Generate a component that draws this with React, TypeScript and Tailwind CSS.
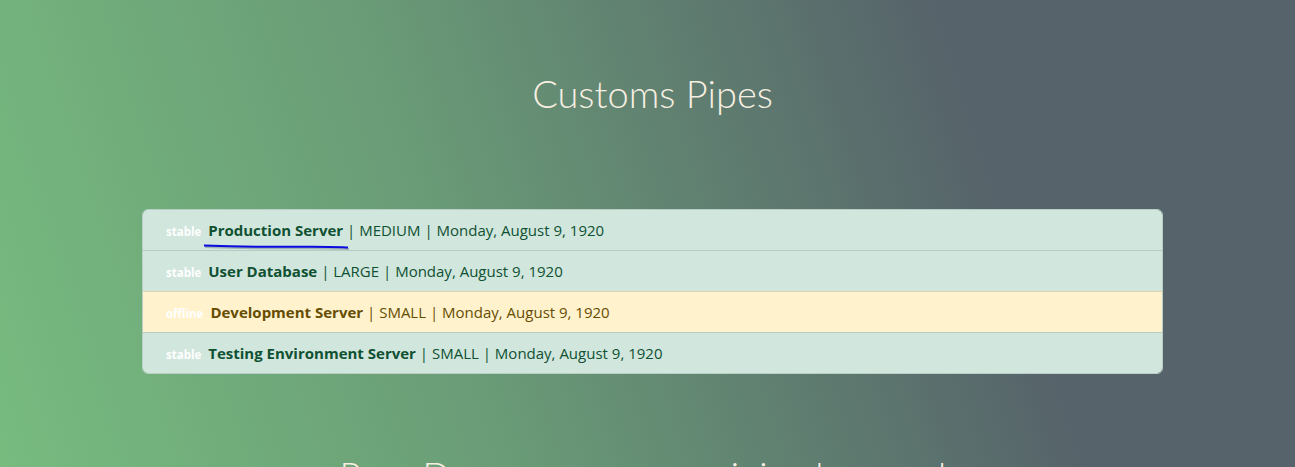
import React from "react";

type Server = { name: string; size: string; status: "stable" | "offline" };

const servers: Server[] = [
  { name: "Production Server", size: "MEDIUM", status: "stable" },
  { name: "User Database", size: "LARGE", status: "stable" },
  { name: "Development Server", size: "SMALL", status: "offline" },
  { name: "Testing Environment Server", size: "SMALL", status: "stable" },
];

export default function App() {
  return (
    <div
      className="h-[467px] w-full overflow-hidden bg-[linear-gradient(72deg,#77bb7f_0%,#6a9c77_35%,#56636a_75%,#56636a_100%)]"
      style={{ fontFamily: '"Open Sans", "Noto Sans", sans-serif' }}
    >
      <div className="ml-[142px] w-[1021px]">
        <h2
          className="pt-[69px] text-center text-[38px] font-light leading-[48px] text-[#f7efe2]"
          style={{ fontFamily: 'Lato, "Open Sans", sans-serif' }}
        >
          Customs Pipes
        </h2>

        <ul className="relative mt-[92px] overflow-hidden rounded-[6px] border border-[#b9cec5] text-[15px] leading-[24px]">
          {servers.map((s, i) => {
            const warn = s.status === "offline";
            return (
              <li
                key={i}
                className={
                  "flex items-baseline px-4 py-2 " +
                  (i > 0 ? "border-t " : "") +
                  (warn
                    ? "bg-[#fff2cc] text-[#664d03] border-[#dfd3b0]"
                    : "bg-[#d1e6dd] text-[#0f5132] border-[#b6ccc3]")
                }
              >
                <span className="px-[7px] text-[11.5px] font-bold leading-none text-white">
                  {s.status}
                </span>
                <span>
                  <b className="font-bold">{s.name}</b> | {s.size} | Monday, August 9, 1920
                </span>
              </li>
            );
          })}
          <svg
            className="pointer-events-none absolute left-[60px] top-[33px]"
            width="150"
            height="8"
            viewBox="0 0 150 8"
          >
            <path
              d="M1 2.5 C 30 3.5, 70 4, 100 3.8 S 135 4.2, 145 4.6"
              stroke="#6b7f88"
              strokeOpacity="0.5"
              strokeWidth="2"
              fill="none"
              transform="translate(1,1.5)"
            />
            <path
              d="M1 2.5 C 30 3.5, 70 4, 100 3.8 S 135 4.2, 145 4.6"
              stroke="#0a0ae0"
              strokeWidth="2"
              fill="none"
            />
          </svg>
        </ul>

        <h2
          className="mt-[78px] whitespace-nowrap text-center text-[37px] font-light leading-[48px] text-[#f7efe2]"
          style={{ fontFamily: 'Lato, "Open Sans", sans-serif' }}
        >
          Pure Demo on a more minimal example
        </h2>
      </div>
    </div>
  );
}
